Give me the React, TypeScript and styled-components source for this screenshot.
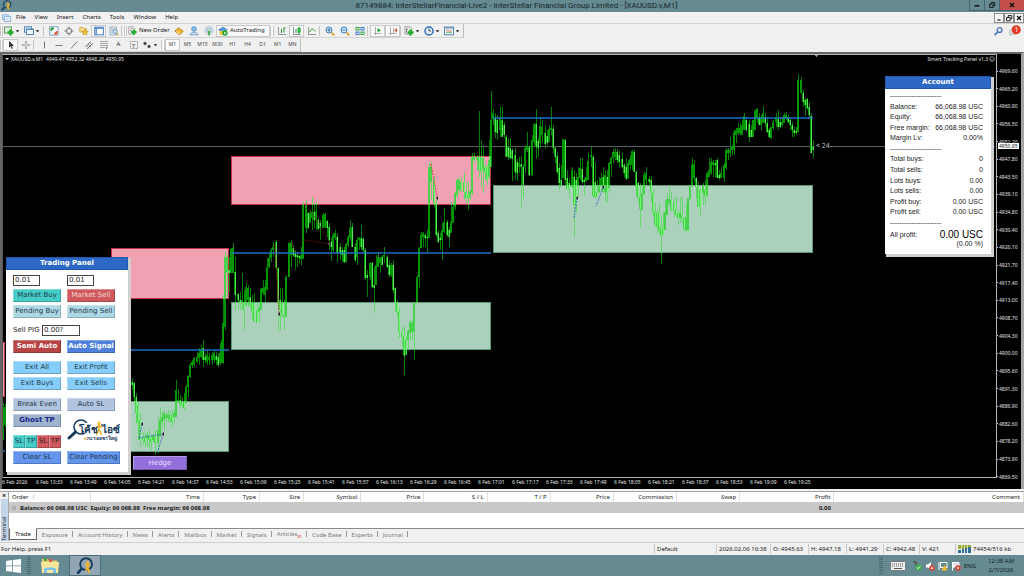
import React from "react";
import styled, { createGlobalStyle, css } from "styled-components";

const UI = `"Noto Sans", "Open Sans", sans-serif`;
const VERDANA = `"DejaVu Sans", sans-serif`;
const ARIAL = `"Liberation Sans", Arial, sans-serif`;

const Global = createGlobalStyle`
  * { box-sizing: border-box; }
  html, body { margin: 0; padding: 0; }
  body { font-family: ${UI}; font-size: 6px; line-height: 8px; color: #1c1c1c; background: #f0f0f0; }
  button, input { font: inherit; color: inherit; margin: 0; padding: 0; border: 0; background: none; border-radius: 0; }
  button { cursor: pointer; white-space: nowrap; }
  h1, h2, p, dl, dd, dt { margin: 0; font: inherit; }
`;

const Window = styled.div`
  display: flex;
  flex-direction: column;
  min-height: 100vh;
`;

/* ---------- title bar ---------- */

const TitleBar = styled.header`
  display: flex;
  align-items: center;
  height: 12px;
  background: #658a92;
`;
const TitleIcon = styled.span`
  width: 64px;
  height: 12px;
  padding-left: 1px;
`;
const Title = styled.h1`
  flex: 1;
  text-align: center;
  font-family: Roboto, ${UI};
  font-size: 8px;
  line-height: 12px;
  color: #17272b;
`;
const TitleButtons = styled.div`
  display: flex;
  align-self: stretch;
  height: 11px;
`;
const TitleButton = styled.button<{ $close?: boolean }>`
  display: flex;
  align-items: center;
  justify-content: center;
  width: ${(p) => (p.$close ? 25 : 15)}px;
  border: 1px solid #47656c;
  border-top: 0;
  border-right-width: 0;
  background: ${(p) => (p.$close ? "#c4504c" : "transparent")};
`;

/* ---------- menu ---------- */

const MenuBar = styled.nav`
  display: flex;
  align-items: center;
  height: 12px;
  border-bottom: 1px solid #d2d2d2;
  background: #f1f1f1;
`;
const MenuIcon = styled.span`
  width: 9px;
  height: 8px;
  margin-left: 2px;
`;
const MenuItem = styled.button`
  padding: 0 5px;
  line-height: 11px;
  color: #111;
  & + & { margin-left: -1px; }
`;
const Spacer = styled.div`
  flex: 1;
`;
const MdiButton = styled.button`
  display: flex;
  align-items: center;
  justify-content: center;
  width: 10px;
  height: 10px;
  border: 1px solid #8c8c8c;
  background: #f8f8f8;
`;

/* ---------- toolbars ---------- */

const ToolArea = styled.div`
  display: flex;
  justify-content: space-between;
  height: 28px;
  background: #f0f0f0;
`;
const ToolRows = styled.div`
  display: flex;
  flex-direction: column;
  align-items: flex-start;
`;
const ToolRow = styled.div`
  display: flex;
  align-items: center;
  height: 14px;
  border-right: 1px solid #bcbcbc;
  border-bottom: 1px solid #d4d4d4;
`;
const Grip = styled.span<{ $w?: number }>`
  width: ${(p) => p.$w ?? 3}px;
  height: 10px;
  border-left: 1px solid #c6c6c6;
  border-right: 1px solid #c6c6c6;
  background: #fafafa;
`;
const Sep = styled.span`
  width: 3px;
  height: 10px;
  border-left: 1px solid #c4c4c4;
`;
const ToolButton = styled.button<{ $w?: number; $on?: boolean }>`
  display: flex;
  align-items: center;
  justify-content: ${(p) => (p.$w ? "flex-start" : "center")};
  gap: 2px;
  width: ${(p) => p.$w ?? 15}px;
  height: 12px;
  padding-left: ${(p) => (p.$w ? 1 : 0)}px;
  line-height: 11px;
  color: #1b1b1b;
  ${(p) =>
    p.$on &&
    css`
      border: 1px solid #c9c9c9;
      background: #f9f9f9;
    `}
`;
const Period = styled(ToolButton)`
  font-size: 5px;
  color: #444;
`;
const Caret = styled.span`
  border: 1px solid transparent;
  border-top: 2px solid #333;
  border-bottom: 0;
  width: 3px;
`;
const Alerts = styled.div`
  display: flex;
  gap: 4px;
  padding: 1px 3px 0 0;
`;
const AlertButton = styled.button`
  width: 12px;
  height: 12px;
`;

function Glyph({ children, size = 10 }: { children: React.ReactNode; size?: number }) {
  return (
    <svg width={size} height={size} viewBox="0 0 10 10" fill="none" aria-hidden="true" style={{ flex: "none", display: "block" }}>
      {children}
    </svg>
  );
}
const plus = <path d="M6.5 3.5v6M3.5 6.5h6" stroke="#1fae2b" strokeWidth="2.6" />;
const icons: Record<string, React.ReactNode> = {
  newChart: (<><rect x=".5" y="1" width="7" height="6" fill="#dff0df" stroke="#5f9a63" />{plus}</>),
  profiles: (<><rect x=".5" y=".8" width="7" height="5.5" fill="#dcebf8" stroke="#5a86b5" /><rect x="2.5" y="3" width="7" height="5.5" fill="#eaf4fc" stroke="#5a86b5" /><path d="M2.5 3.5h7" stroke="#5a86b5" /></>),
  market: (<><rect x=".7" y=".7" width="8.4" height="8.4" fill="#f3f9fd" stroke="#86a9c4" /><path d="M2 5V2h3z" fill="#27a53c" stroke="#27a53c" /><path d="M5 8h3V5z" fill="#e05533" stroke="#e05533" /></>),
  data: (<><circle cx="5" cy="5" r="2.8" stroke="#7d7d7d" /><path d="M5 .5v3M5 6.5v3M.5 5h3M6.5 5h3" stroke="#7d7d7d" /></>),
  navigator: (<><path d="M.8 1.5h3l.8 1h2.6v3.500H.8z" fill="#ffe08a" stroke="#caa23b" strokeWidth=".8" /><path d="M6 3.200l1 1.900 2.100.3-1.500 1.500.3 2.100L6 8l-1.900 1 .3-2.100-1.500-1.500 2.100-.3z" fill="#f3c334" stroke="#b88b1a" strokeWidth=".6" /></>),
  terminal: (<><rect x=".7" y="1.2" width="8.6" height="7.6" fill="#fff" stroke="#3f7cc4" /><path d="M1 2.2h8M2.200 2v6.5" stroke="#3f7cc4" strokeWidth="1.2" /></>),
  tester: (<><rect x="1" y="1" width="6.5" height="8" fill="#eef4f8" stroke="#8aa0b0" strokeWidth=".8" /><path d="M2 3h4M2 5h3M2 7h2" stroke="#8fb0c8" /><circle cx="6.2" cy="5.6" r="2" fill="#cfe6f5" stroke="#5c86a8" strokeWidth=".8" /><path d="M7.7 7.2l1.700 2" stroke="#d8a02a" strokeWidth="1.3" /></>),
  order: (<><path d="M1 .8h4.500l2 2V9H1z" fill="#f7f7f7" stroke="#8c8c8c" strokeWidth=".8" /><path d="M2.500 3h3M2.500 5h2" stroke="#9a9a9a" /><path d="M6.500 3.800v6M3.500 6.800h6" stroke="#1fae2b" strokeWidth="2.4" /></>),
  editor: (<><path d="M.8 5l3.800-3.200 4.700 3.400L5.500 8.800z" fill="#f2b632" stroke="#a8741a" strokeWidth=".8" /><path d="M2.500 5.500l3 2.200" stroke="#fff0b8" /></>),
  expert: (<><circle cx="5" cy="3" r="2.3" fill="#8ec2ec" stroke="#3d7fbb" strokeWidth=".8" /><path d="M1 8.800c0-3 8-3 8 0z" fill="#dcecf8" stroke="#5a8fbf" strokeWidth=".8" /></>),
  signal: (<><circle cx="5" cy="4.5" r="4" stroke="#9fb9cc" strokeWidth=".8" /><circle cx="5" cy="4.5" r="2.2" stroke="#6fa6d0" strokeWidth=".9" /><path d="M5 4.500V9.500" stroke="#2fa83e" strokeWidth="1.6" /></>),
  auto: (<><path d="M.5 3.800L5 1l4.300 2.800L5 6z" fill="#5aa0dc" stroke="#2d6ea8" strokeWidth=".6" /><path d="M1.500 5h5v3.800h-5z" fill="#f3c23c" /><circle cx="7" cy="7" r="2.7" fill="#25a832" /><path d="M6.200 5.700v2.600L8.400 7z" fill="#fff" /></>),
  bars: (<><path d="M1.500 1v8M1 8.500h8" stroke="#999" /><path d="M4.500 3v4M4 6h1M7 1.500v5M7 2h1.500" stroke="#2a9b35" /></>),
  candles: (<><path d="M1.500 1v8M1 8.500h8" stroke="#999" /><path d="M4 3v4M7 1v7" stroke="#1f9430" /><rect x="6" y="2.2" width="2.2" height="4" fill="#2cc044" stroke="#1f9430" strokeWidth=".6" /></>),
  line: (<><path d="M1.500 1v8M1 8.500h8" stroke="#999" /><path d="M2.500 6c2-4 3-4 6-.5" stroke="#2a9b35" /></>),
  zoomIn: (<><circle cx="4" cy="4" r="3" fill="#d6ebf9" stroke="#3f7fb8" /><path d="M4 2.300v3.400M2.300 4h3.400" stroke="#2c6ca6" /><path d="M6.300 6.300l3 3" stroke="#d9a22b" strokeWidth="1.7" /></>),
  zoomOut: (<><circle cx="4" cy="4" r="3" fill="#d6ebf9" stroke="#3f7fb8" /><path d="M2.300 4h3.400" stroke="#2c6ca6" /><path d="M6.300 6.300l3 3" stroke="#d9a22b" strokeWidth="1.7" /></>),
  tile: (<><path d="M.5 1h4v3.500h-4zM5.500 5.500h4V9h-4z" fill="#3aa345" /><path d="M5.500 1h4v3.500h-4zM.5 5.500h4V9h-4z" fill="#3e78c8" /><path d="M1.200 2.800h2.600M6.200 2.800h2.600M1.200 7.300h2.600M6.200 7.300h2.600" stroke="#fff" /></>),
  scroll: (<><path d="M2.500 1v8M1 7.500h8" stroke="#999" strokeWidth=".8" /><path d="M4.500 2v4.500L8 4.200z" fill="#27a53c" /></>),
  shift: (<><path d="M2.500 1v8M1 7.500h8M5.500 1.500v5.500" stroke="#999" strokeWidth=".8" /><path d="M9 2.200v4L6 4.200z" fill="#d6502f" /></>),
  indicators: (<><path d="M1 .8h5l1.500 1.500V8H1z" fill="#f4f4f4" stroke="#888" strokeWidth=".8" /><path d="M2.500 6.500V3h1.500" stroke="#777" />{plus}</>),
  clock: (<><circle cx="5" cy="5" r="4" fill="#e8f2fb" stroke="#2b6cb8" strokeWidth="1.5" /><path d="M5 2.500V5h2" stroke="#333" strokeWidth=".9" /></>),
  template: (<><rect x=".5" y="1" width="9" height="7.8" fill="#f3f8fc" stroke="#5b86ae" /><path d="M.5 2h9" stroke="#5b86ae" /><path d="M2 5l2-1 2 1.500 2-1.500" stroke="#d65b3a" strokeWidth=".8" /><path d="M2 7l2-1 2 1 2-1" stroke="#36a346" strokeWidth=".8" /></>),
  cursor: <path d="M3 .8v7l1.700-1.500 1.200 2.700 1.100-.5-1.200-2.600h2.200z" fill="#333" />,
  cross: <path d="M5 .8v3.400M5 5.800v3.400M.8 5h3.400M5.800 5h3.400" stroke="#777" />,
  vline: <path d="M5.500 1.500v7" stroke="#777" />,
  hline: <path d="M1.500 5.500h7" stroke="#777" />,
  trend: <path d="M2 8.500l6-7" stroke="#777" />,
  channel: <path d="M1 7l6-6M3 9l6-6M2.500 5.500l3 3M4 4l3 3M5.500 2.500l3 3" stroke="#777" strokeWidth=".9" />,
  fibo: (<><path d="M1 1.500h8M1 3.500h8M1 5.500h8M1 7.500h5" stroke="#888" strokeWidth=".7" /><path d="M7.500 9.500V7h1.500" stroke="#666" strokeWidth=".8" /></>),
  label: <rect x="1.5" y="1.5" width="7" height="7" stroke="#777" strokeWidth=".8" strokeDasharray="1 .6" />,
  arrows: <path d="M1 3.500l2-2 2 2-2 2zM5 6.500l2-2 2 2-2 2z" fill="#444" />,
  mdi: (<><rect x=".5" y="1" width="6.5" height="5" fill="#dceafa" stroke="#6fa0d0" strokeWidth=".8" /><rect x="2.5" y="3" width="7" height="5.5" fill="#eef6fd" stroke="#6fa0d0" strokeWidth=".8" /><path d="M4 6.500l1.500-1 2 1" stroke="#6fa0d0" strokeWidth=".7" /></>),
  search: (<><circle cx="6" cy="3.7" r="2.2" stroke="#4a74bd" strokeWidth="1.2" /><path d="M4.300 5.400L1.500 8.300" stroke="#4a74bd" strokeWidth="1.5" /></>),
  seeker: (<><circle cx="5.6" cy="4" r="3.3" stroke="#123c5c" strokeWidth="1" /><path d="M3.200 6.500L.8 9.200" stroke="#123c5c" strokeWidth="1.5" /><circle cx="6.4" cy="3" r=".8" fill="#f0b32a" /><path d="M6.500 3.500v2.500M6.500 5.500l1 3.200M6.500 5.500l-1 2.500M5 4.700l1.500-.7 1.400 1" stroke="#f0b32a" strokeWidth="1" /></>),
};

function Tool({ icon, label, on, drop }: { icon: string; label: string; on?: boolean; drop?: boolean }) {
  return (
    <ToolButton $on={on} $w={drop ? 20 : undefined} aria-label={label}>
      <Glyph>{icons[icon]}</Glyph>
      {drop && <Caret />}
    </ToolButton>
  );
}

/* ---------- chart ---------- */

const ChartFrame = styled.main`
  flex: 1;
  display: grid;
  grid-template-columns: minmax(0, 1fr) 24px;
  grid-template-rows: minmax(0, 1fr) 11px;
  min-height: 436px;
  border: 2px solid #666;
  border-right: 3px solid #a5a5a5;
  border-bottom: 0;
  background: #000;
  color: #e4e4e4;
  font-size: 5px;
  line-height: 6px;
`;
const Plot = styled.section`
  position: relative;
  border: 1px solid #b4b4b4;
  border-left-color: #555;
`;
const Drawing = styled.svg`
  position: absolute;
  inset: 0;
  width: 100%;
  height: 100%;
`;
const PlotHead = styled.div`
  position: relative;
  display: flex;
  justify-content: space-between;
  padding: 1px 1px 0 2px;
`;
const Symbol = styled.span`
  display: flex;
  align-items: center;
  gap: 2px;
`;
const Quotes = styled.span`
  margin-left: 1px;
`;
const Tracker = styled.span`
  display: flex;
  align-items: center;
  gap: 1px;
`;
const WhiteCaret = styled(Caret)`
  width: 4px;
  border-width: 2px 2px 0;
  border-top-color: #e6e6e6;
`;
const PriceAxis = styled.div`
  display: flex;
  flex-direction: column;
  justify-content: space-between;
  position: relative;
  padding: 14px 0 0;
  margin-bottom: -2px;
`;
const PriceTick = styled.span`
  display: flex;
  align-items: center;
  gap: 1px;
  white-space: nowrap;
  &::before { content: ""; width: 1px; height: 1px; background: #ccc; }
`;
const LastPrice = styled.span`
  position: absolute;
  left: 1px;
  top: 89px;
  padding: 0 1px;
  background: #fff;
  color: #111;
`;
const TimeAxis = styled.div`
  display: flex;
  width: 82%;
  padding-top: 1px;
`;
const TimeTick = styled.span`
  flex: 1 0 0;
  min-width: 0;
  white-space: nowrap;
`;

/* Candles: x, high, body top, body bottom, low, in thirds of a pixel from the origin of the run. */
type Run = { x: number; y: number; data: number[] };
const runs: Run[] = [
  { x: 0, y: 250, data: [
    9,460,480,560,570, 15,462,470,525,530,
    390,360,370,405,405, 396,385,395,405,420, 403,395,400,440,455, 409,430,440,490,520, 415,455,465,520,570, 421,490,510,570,590,
    428,545,560,570,585, 434,550,560,575,590, 441,545,555,565,590, 447,540,555,570,595, 453,555,560,575,600, 460,550,555,570,580,
    466,540,560,580,615, 473,500,540,580,610, 479,470,510,560,560, 485,485,500,515,530, 492,480,490,510,540, 498,485,495,505,515,
    505,480,492,505,515, 511,485,495,510,520, 517,480,495,515,530, 523,480,490,500,515, 529,390,420,500,500, 535,418,450,455,460,
    541,435,450,465,475, 547,440,455,465,475, 553,430,455,475,480, 559,405,410,460,460, 565,375,378,410,440, 571,340,345,380,385,
    577,330,335,345,355, 583,320,325,345,350, 590,305,320,335,340, 596,295,310,325,345, 603,285,300,320,325, 609,270,295,330,350,
    615,310,320,330,340, 622,300,315,335,345, 628,310,320,330,345, 635,305,315,330,345, 641,300,310,330,340, 647,305,318,330,345,
    654,310,320,345,350, 660,305,310,340,345 ] },
  { x: 220, y: 140, data: [
    2,600,610,670,670, 8,465,550,670,672, 14,335,350,560,570, 20,345,350,395,470, 27,350,390,400,455, 33,325,328,400,400,
    40,308,325,398,400, 46,350,396,465,510, 53,460,462,480,510, 59,455,480,490,510, 65,400,480,485,510, 72,450,485,510,570,
    78,430,440,495,500, 84,435,445,480,500, 91,445,470,495,505, 97,465,490,520,540, 103,460,490,545,545, 110,485,510,550,550,
    116,485,505,515,550, 122,445,447,510,510, 129,420,445,460,465, 135,420,440,465,490, 142,355,380,450,450, 148,340,355,380,385,
    154,325,330,355,365, 160,305,320,330,350, 167,300,305,385,388, 173,380,385,488,575, 180,445,480,510,570, 186,445,485,528,530,
    193,480,525,530,570, 199,405,410,530,530, 206,305,310,412,412, 212,300,310,345,380, 218,315,325,345,350, 224,330,340,350,390,
    231,335,345,350,380, 237,345,348,355,370, 244,320,345,358,375, 250,185,195,357,358, 257,180,195,265,280, 263,215,218,265,268,
    270,210,218,250,250, 276,170,215,235,270, 282,190,215,240,265, 289,185,212,240,270, 295,235,240,268,270, 301,240,250,265,300,
    308,220,225,265,265, 314,218,222,260,265, 320,240,243,265,290, 327,250,262,300,330, 333,295,305,320,362, 340,280,285,330,335,
    346,270,280,295,300, 352,280,290,340,365, 359,310,320,340,360, 365,320,330,345,365, 372,320,330,365,370, 378,310,312,365,365,
    385,285,290,315,320, 391,240,265,295,300, 397,250,262,320,320, 404,310,320,360,365, 410,290,300,350,375, 417,290,295,300,330,
    423,255,295,320,330, 430,290,298,330,335, 436,325,330,415,420, 442,390,405,415,470, 449,365,370,410,420, 455,365,370,440,445,
    461,380,435,445,520, 468,345,375,435,435, 474,335,350,380,380, 481,350,352,370,400, 487,345,350,375,375, 493,320,345,350,370,
    500,345,350,380,385, 506,360,375,405,410, 513,370,375,405,410, 519,360,375,450,460, 525,440,445,490,515, 532,480,490,515,530,
    538,500,515,575,595, 545,560,575,590,620, 551,560,590,648,705, 558,590,600,645,645, 564,570,572,600,630, 570,540,545,580,600,
    577,540,550,575,600, 583,485,488,575,660, 590,405,410,490,490, 596,320,325,410,445, 602,275,285,325,325, 609,275,278,290,320,
    615,280,285,295,320, 622,270,290,295,335, 628,70,80,295,295, 634,65,80,125,180, 641,110,120,190,200, 647,180,190,285,290,
    654,270,280,305,308, 660,280,295,300,330, 667,250,270,300,360, 673,205,245,275,280, 680,240,245,285,290, 686,260,270,290,320,
    692,185,245,280,280, 699,190,200,250,250, 705,155,160,200,210, 711,115,120,165,175, 718,115,120,150,160, 724,110,125,150,155,
    731,100,125,155,180, 737,125,155,175,190, 744,125,165,175,210, 750,150,152,175,180, 757,40,50,160,165, 763,38,50,60,70,
    770,45,50,60,90, 776,-86,50,90,115, 782,0,50,95,140, 789,20,55,90,160, 795,70,80,100,120, 802,75,80,120,135, 808,0,60,110,120 ] },
  { x: 480, y: 70, data: [
    34,62,150,290,290, 40,118,130,148,165, 46,130,145,185,205, 52,135,150,190,210, 59,110,145,180,200, 65,110,150,200,200, 72,155,165,195,205,
    78,195,200,262,262, 85,205,230,262,270, 91,205,235,265,268, 97,235,240,268,332, 104,235,255,305,330, 110,268,275,308,332,
    116,262,280,290,310, 122,258,283,290,412, 129,283,290,344,385, 135,225,235,290,310, 142,187,228,240,245, 148,225,230,315,318,
    155,195,210,315,318, 162,160,162,215,225, 168,118,162,230,268, 174,205,212,235,262, 181,140,168,220,235, 187,150,170,195,220,
    194,165,190,222,238, 200,180,198,220,225, 206,165,178,215,215, 213,110,175,180,195, 219,165,177,235,248, 225,230,235,262,280,
    231,245,258,305,312, 238,280,295,340,360, 244,285,330,345,352, 250,207,208,325,325, 256,207,210,330,345, 262,300,325,357,360,
    268,325,340,357,385, 275,290,300,350,355, 281,300,320,405,500, 288,310,330,405,430, 294,290,320,345,380, 300,265,293,325,330,
    307,265,298,335,342, 313,325,330,335,375, 319,290,320,332,335, 325,250,272,330,330, 332,232,255,262,290, 338,255,260,378,385,
    344,275,335,380,385, 350,330,365,380,385, 356,320,345,365,370, 362,310,325,345,365, 369,290,322,365,370, 375,300,315,365,395,
    381,300,320,370,398, 387,275,280,355,370, 393,260,265,282,320, 400,237,245,265,280, 406,235,245,262,270, 412,238,245,270,280,
    418,243,255,275,290, 425,250,268,290,295, 431,278,285,310,320, 437,265,290,328,330, 443,270,280,325,328, 449,255,268,285,300,
    455,240,243,285,300, 462,240,245,305,305, 468,300,305,350,380, 474,335,340,385,395, 481,340,380,418,472, 487,345,370,420,420,
    493,305,315,372,375, 499,290,310,330,350, 506,318,328,335,345, 512,318,330,370,395, 518,360,370,425,440, 524,400,425,465,470,
    530,420,430,470,490, 537,400,430,480,492, 543,440,470,495,583, 549,425,475,495,495, 555,390,425,480,480, 562,370,388,435,435,
    568,352,388,400,408, 574,365,390,420,425, 581,380,395,425,440, 587,380,420,435,445, 593,420,430,445,465, 599,380,430,445,460,
    606,380,435,445,460, 612,440,445,478,485, 618,400,440,480,485, 624,385,385,480,482, 630,345,345,388,390, 637,265,285,345,350,
    643,270,282,325,335, 649,320,325,350,385, 655,335,350,410,412, 661,355,360,410,438, 668,340,345,370,405, 674,330,360,380,405,
    680,305,310,378,380, 687,265,300,320,320, 693,265,275,310,315, 699,270,275,285,320, 706,270,278,285,320, 712,265,270,325,325,
    718,300,315,325,330, 724,290,310,325,325, 731,280,285,325,335, 737,235,240,295,300, 743,235,240,250,270, 750,200,240,250,260,
    756,225,230,240,255, 762,180,185,240,255, 768,175,180,195,220, 774,160,175,190,195, 781,160,175,190,195, 787,150,165,195,195,
    793,130,138,180,180, 799,140,150,180,185, 806,150,163,200,215, 812,165,180,200,200, 818,150,150,200,200, 824,118,122,180,180,
    831,115,118,145,160, 837,130,140,165,165, 843,135,140,165,180, 849,108,130,160,160, 855,128,140,160,170, 862,145,160,185,190,
    868,175,180,200,205, 874,170,170,205,208, 880,150,155,175,180, 887,130,140,155,170, 893,120,148,170,180, 899,140,155,170,175,
    906,140,155,165,170, 912,128,135,160,160, 918,125,135,145,150, 924,135,140,155,160, 931,145,150,165,180, 937,155,165,180,200,
    943,170,180,190,200, 949,170,183,190,195, 955,13,30,185,185, 962,22,30,70,72, 968,60,70,95,110, 974,85,90,105,138,
    981,85,88,115,120, 987,95,110,135,148, 994,130,137,248,250, 1000,210,230,240,263 ] },
];

type Candle = { x: number; hi: number; top: number; bot: number; lo: number; down: boolean };
const candles: Candle[] = runs.flatMap((run) => {
  const out: Candle[] = [];
  let prev = 0;
  for (let i = 0; i < run.data.length; i += 5) {
    const [x, hi, top, bot, lo] = run.data.slice(i, i + 5);
    const mid = top + bot;
    out.push({
      x: Math.round(run.x + x / 3),
      hi: Math.round(run.y + hi / 3),
      top: Math.round(run.y + top / 3),
      bot: Math.round(run.y + bot / 3),
      lo: Math.round(run.y + lo / 3),
      down: i > 0 && mid > prev,
    });
    prev = mid;
  }
  return out;
});

function Candles({ wick, up, down }: { wick: string; up: string; down: string }) {
  return (
    <>
      {candles.map((c, i) => {
        const h = Math.max(1, c.bot - c.top);
        return (
          <g key={i}>
            <rect x={c.x} y={c.hi} width={1} height={Math.max(1, c.lo - c.hi)} fill={wick} />
            <rect x={c.x - 1} y={c.top} width={2} height={h} fill={up} />
            {c.down && <rect x={c.x} y={c.top} width={1} height={h} fill={down} />}
          </g>
        );
      })}
    </>
  );
}

type Zone = [number, number, number, number, "sell" | "buy"];
const zones: Zone[] = [
  [2, 342, 3, 55, "sell"],
  [111, 248, 118, 51, "sell"],
  [231, 156, 260, 49, "sell"],
  [111, 401, 118, 51, "buy"],
  [231, 302, 260, 48, "buy"],
  [493, 185, 320, 68, "buy"],
];
const levels = [[2, 451, 5], [111, 350, 229], [231, 253, 491], [493, 118, 813]];
const trades: [string, string][] = [
  ["M275 245l4 69", "#c0302c"], ["M292 242l3 11", "#c0302c"], ["M306 203l24 40", "#7a1414"], ["M303 240l27 4", "#7a1414"],
  ["M431 164l6 32", "#c0302c"], ["M142 424l-3 15", "#3b4fd0"], ["M139 438l24-4-6 20", "#3b4fd0"],
  ["M577 198l-3 20", "#3b4fd0"], ["M603 188l-7 18", "#3b4fd0"],
];
const fills: [number, number][] = [[279, 314], [330, 244], [437, 198], [142, 424], [163, 434], [577, 198], [603, 187]];

function ChartDrawing() {
  return (
    <Drawing aria-hidden="true" shapeRendering="crispEdges">
      <g transform="translate(-3 -55)">
        <rect x="2" y="146" width="100%" height="1" fill="#59636c" />
        <Candles wick="#008200" up="#009600" down="#5ae25a" />
        <clipPath id="zoneClip">
          {zones.map(([x, y, w, h], i) => (
            <rect key={i} x={x} y={y} width={w} height={h} />
          ))}
        </clipPath>
        {zones.map(([x, y, w, h, kind], i) => (
          <rect key={i} x={x + 0.5} y={y + 0.5} width={w - 1} height={h - 1} fill={kind === "sell" ? "#f2a1b2" : "#abd1bd"} stroke={kind === "sell" ? "#c2344e" : "#5b9a79"} />
        ))}
        <g clipPath="url(#zoneClip)">
          <Candles wick="#66d96c" up="#48d24e" down="#74f674" />
        </g>
        {levels.map(([x, y, x2]) => (
          <rect key={y} x={x} y={y - 1} width={x2 - x} height={1} fill="#1c76d2" opacity=".7" />
        ))}
        {levels.map(([x, y, x2]) => (
          <rect key={y} x={x} y={y} width={x2 - x} height={1} fill="#1c76d2" opacity=".7" />
        ))}
        <g fill="none" strokeDasharray="2 1" shapeRendering="auto">
          {trades.map(([d, c]) => (
            <path key={d} d={d} stroke={c} strokeWidth=".8" />
          ))}
        </g>
        {fills.map(([x, y]) => (
          <path key={x} d={`M${x + 1} ${y - 2}v4l-3-2z`} fill="#222" stroke="#ddd" strokeWidth=".3" />
        ))}
        <path d="M814 54h5l-2.500 3z" fill="#7e8d9a" />
      </g>
    </Drawing>
  );
}

const LotMark = styled.span`
  position: absolute;
  left: 812px;
  top: 87px;
  padding-left: 1px;
  background: #000;
  font-size: 7px;
  line-height: 8px;
  color: #b9bec3;
`;

/* ---------- floating panels ---------- */

const Panel = styled.section`
  position: absolute;
  background: #fff;
  color: #222;
  box-shadow: 2px 2px 0 1px #cfcfcf;
`;
const PanelTitle = styled.h2`
  height: 13px;
  border: 1px solid #2257b0;
  background: #2d68c4;
  color: #fff;
  font: bold 7px/11px ${VERDANA};
  text-align: center;
`;
const TradingBox = styled(Panel)`
  left: 3px;
  top: 202px;
  width: 122px;
  font: 7px/11px ${VERDANA};
`;
const TradingBody = styled.div`
  display: flex;
  flex-direction: column;
  gap: 8px;
  padding: 5px 6px 8px 7px;
`;
const Pairs = styled.div`
  display: grid;
  grid-template-columns: 48px 48px;
  gap: 3px 6px;
`;
const Columns = styled.div`
  display: flex;
  gap: 6px;
`;
const Column = styled.div<{ $w: number }>`
  display: flex;
  flex-direction: column;
  align-items: flex-start;
  gap: 3px;
  width: ${(p) => p.$w}px;
`;
const Field = styled.input<{ $w: number }>`
  width: ${(p) => p.$w}px;
  height: 11px;
  padding-left: 1px;
  border: 1px solid #444;
  background: #fff;
`;
const FieldRow = styled.div`
  display: flex;
  align-items: center;
  gap: 1px;
  margin: -1px 0 1px;
`;
const PigLabel = styled.label`
  width: 28px;
  white-space: nowrap;
`;
const Act = styled.button<{ $bg: string; $fg?: string; $bold?: boolean; $w?: number }>`
  display: flex;
  align-items: center;
  justify-content: center;
  flex: none;
  width: ${(p) => p.$w ?? 48}px;
  height: 13px;
  background: ${(p) => p.$bg};
  color: ${(p) => p.$fg ?? "#1e3a4c"};
  font-weight: ${(p) => (p.$bold ? "bold" : "normal")};
  border: 1px solid rgba(255, 255, 255, 0.3);
  border-right-color: rgba(0, 0, 0, 0.2);
  border-bottom-color: rgba(0, 0, 0, 0.2);
`;
const Minis = styled.div`
  display: flex;
  padding-top: 5px;
`;
const Logo = styled.div`
  display: flex;
  align-items: center;
  height: 34px;
`;
const Hedge = styled(Act)`
  position: absolute;
  left: 130px;
  top: 401px;
  height: 14px;
  font: 7px/11px ${VERDANA};
`;

const AccountBox = styled(Panel)`
  right: 5px;
  top: 21px;
  width: 106px;
  font: 7px/10px ${ARIAL};
`;
const AccountBody = styled.dl`
  display: flex;
  flex-direction: column;
  justify-content: space-between;
  height: 139px;
  padding: 2px 8px 0 5px;
`;
const AccountLine = styled.div`
  display: flex;
  justify-content: space-between;
  white-space: nowrap;
`;
const Total = styled.div`
  display: flex;
  justify-content: space-between;
  align-items: center;
  padding: 1px 8px 0 5px;
`;
const TotalValue = styled.strong`
  font-weight: normal;
  font-size: 10px;
  line-height: 11px;
  color: #000;
`;
const Percent = styled.p`
  padding: 0 8px 6px 0;
  line-height: 8px;
  text-align: right;
`;

const dashes = "----------------------";
const account: [string, string][] = [
  [dashes, ""], ["Balance:", "66,068.98 USC"], ["Equity:", "66,068.98 USC"], ["Free margin:", "66,068.98 USC"], ["Margin Lv:", "0.00%"],
  [dashes, ""], ["Total buys:", "0"], ["Total sells:", "0"], ["Lots buys:", "0.00"], ["Lots sells:", "0.00"],
  ["Profit buy:", "0.00 USC"], ["Profit sell:", "0.00 USC"], [dashes, ""],
];

function TradingPanel() {
  return (
    <TradingBox>
      <PanelTitle>Trading Panel</PanelTitle>
      <TradingBody>
        <Pairs>
          <Field $w={27} defaultValue="0.01" aria-label="Buy lots" />
          <Field $w={27} defaultValue="0.01" aria-label="Sell lots" />
          <Act $bg="#45ccc6">Market Buy</Act>
          <Act $bg="#cf5a5e" $fg="#f6d5d6">Market Sell</Act>
          <Act $bg="#add8e4">Pending Buy</Act>
          <Act $bg="#add8e4">Pending Sell</Act>
        </Pairs>
        <Column $w={108}>
          <FieldRow>
            <PigLabel htmlFor="pig">Sell PIG</PigLabel>
            <Field id="pig" $w={38} defaultValue="0.00?" />
          </FieldRow>
          <Columns>
            <Act $bg="#b84444" $fg="#fff" $bold>Semi Auto</Act>
            <Act $bg="#4f80dc" $fg="#fff" $bold>Auto Signal</Act>
          </Columns>
        </Column>
        <Pairs>
          <Act $bg="#87cdfa">Exit All</Act>
          <Act $bg="#87cdfa">Exit Profit</Act>
          <Act $bg="#87cdfa">Exit Buys</Act>
          <Act $bg="#87cdfa">Exit Sells</Act>
        </Pairs>
        <Columns>
          <Column $w={48}>
            <Act $bg="#b0c4de">Break Even</Act>
            <Act $bg="#9db4cc" $fg="#1a1f8c" $bold>Ghost TP</Act>
            <Minis>
              <Act $w={12} $bg="#45ccc6">SL</Act>
              <Act $w={12} $bg="#45ccc6">TP</Act>
              <Act $w={12} $bg="#cf5a5e" $fg="#3a1a1c">SL</Act>
              <Act $w={12} $bg="#cf5a5e" $fg="#3a1a1c">TP</Act>
            </Minis>
            <Act $bg="#6495ed">Clear SL</Act>
          </Column>
          <Column $w={53}>
            <Act $bg="#b0c4de">Auto SL</Act>
            <Logo>
              <svg width="54" height="26" viewBox="0 0 54 26" role="img" aria-label="โค้ชไอซ์">
                <circle cx="14" cy="9" r="7" fill="none" stroke="#15385a" strokeWidth="1.5" />
                <path d="M8.500 14L2 20" stroke="#15385a" strokeWidth="3" strokeLinecap="round" />
                <rect x="14" y="5" width="14" height="10" fill="#fff" />
                <circle cx="32" cy="5" r="1.5" fill="#f2b52c" />
                <path d="M32 6v6M32 11l2.500 6M32 11l-2.500 6M29 10l3-2.500 3 2" stroke="#f2b52c" strokeWidth="1.6" fill="none" />
                <text x="12" y="15" fontSize="10" fontWeight="bold" fill="#15385a" fontFamily={UI}>โค้ช</text>
                <text x="35" y="15" fontSize="10" fontWeight="bold" fill="#15385a" fontFamily={UI}>ไอซ์</text>
                <text x="17" y="22" fontSize="5" fontWeight="bold" fill="#15385a" fontFamily={UI}>
                  <tspan fill="#e0a21f">แ</tspan>กะรอยขาใหญ่
                </text>
              </svg>
            </Logo>
            <Act $w={53} $bg="#6495ed">Clear Pending</Act>
          </Column>
        </Columns>
      </TradingBody>
    </TradingBox>
  );
}

function AccountPanel() {
  return (
    <AccountBox>
      <PanelTitle>Account</PanelTitle>
      <AccountBody>
        {account.map(([k, v], i) => (
          <AccountLine key={i}>
            <dt>{k}</dt>
            <dd>{v}</dd>
          </AccountLine>
        ))}
      </AccountBody>
      <Total>
        All profit: <TotalValue>0.00 USC</TotalValue>
      </Total>
      <Percent>(0.00 %)</Percent>
    </AccountBox>
  );
}

const prices = "4969.60 4965.20 4960.90 4956.50 4952.20 4947.80 4943.50 4939.10 4934.80 4930.40 4926.10 4921.70 4917.40 4913.00 4908.70 4904.30 4900.00 4895.60 4891.30 4886.90 4882.60 4878.20 4873.90 4869.50".split(" ");
const times = "2026 13:33 13:49 14:05 14:21 14:37 14:53 15:09 15:25 15:41 15:57 16:13 16:29 16:45 17:01 17:17 17:33 17:49 18:05 18:21 18:37 18:53 19:09 19:25".split(" ");

/* ---------- terminal ---------- */

const Terminal = styled.section`
  display: flex;
  margin-top: 2px;
  border-top: 1px solid #a6a6a6;
`;
const TerminalSide = styled.div`
  display: flex;
  flex-direction: column;
  align-items: center;
  width: 9px;
  border-right: 1px solid #a6a6a6;
`;
const SideClose = styled.button`
  height: 7px;
  font-size: 7px;
  line-height: 6px;
  font-weight: bold;
`;
const SideLabel = styled.span`
  flex: 1;
  width: 7px;
  line-height: 7px;
  background: #c3d5e8;
  writing-mode: vertical-rl;
  transform: rotate(180deg);
`;
const TerminalMain = styled.div`
  flex: 1;
  min-width: 0;
  display: flex;
  flex-direction: column;
`;
const Grid = styled.div`
  height: 37px;
  background: #fff;
  border-bottom: 1px solid #8b8b8b;
`;
const Table = styled.table`
  width: 100%;
  table-layout: fixed;
  border-collapse: collapse;
`;
const Th = styled.th<{ $left?: boolean }>`
  height: 10px;
  padding: 0 3px;
  border-right: 1px solid #e0e0e0;
  font-weight: normal;
  line-height: 9px;
  text-align: ${(p) => (p.$left ? "left" : "right")};
`;
const SortMark = styled.span`
  margin-left: 4px;
  color: #888;
`;
const Td = styled.td<{ $left?: boolean }>`
  height: 11px;
  padding: 0 3px;
  background: #c8c8c8;
  font-weight: bold;
  line-height: 10px;
  text-align: ${(p) => (p.$left ? "left" : "right")};
  white-space: pre;
`;
const Dot = styled.span`
  display: inline-block;
  width: 4px;
  height: 4px;
  margin-right: 4px;
  border: 1px solid #999;
  border-radius: 50%;
`;
const Tabs = styled.div`
  display: flex;
  height: 12px;
`;
const Tab = styled.button<{ $on?: boolean }>`
  position: relative;
  height: 11px;
  padding: 0 5px;
  line-height: 10px;
  color: #7b7b7b;
  &::after { content: ""; position: absolute; right: 0; top: 2px; width: 1px; height: 6px; background: #999; }
  ${(p) =>
    p.$on &&
    css`
      margin: -1px 0 0 0;
      height: 12px;
      color: #111;
      background: #fff;
      border: 1px solid #666;
      border-top-color: #fff;
      &::after { display: none; }
    `}
`;
const Count = styled.sub`
  font-size: 4px;
  line-height: 4px;
  color: #e03535;
`;

const columns: [string, number][] = [
  ["Order", 81], ["Time", 113], ["Type", 56], ["Size", 44], ["Symbol", 57], ["Price", 63], ["S / L", 63], ["T / P", 63],
  ["Price", 63], ["Commission", 63], ["Swap", 63], ["Profit", 94], ["Comment", 189],
];
const tabs = ["Trade", "Exposure", "Account History", "News", "Alerts", "Mailbox", "Market", "Signals", "Articles", "Code Base", "Experts", "Journal"];

/* ---------- status and task bars ---------- */

const StatusBar = styled.footer`
  display: flex;
  align-items: center;
  height: 13px;
  margin-top: 1px;
  border-top: 1px solid #cfcfcf;
`;
const Cell = styled.span<{ $w?: number }>`
  display: flex;
  align-items: center;
  gap: 2px;
  flex: ${(p) => (p.$w ? `0 0 ${p.$w}px` : "1")};
  padding-left: ${(p) => (p.$w ? 2 : 1)}px;
  border-left: ${(p) => (p.$w ? "1px solid #c8c8c8" : "0")};
  line-height: 10px;
  white-space: nowrap;
`;
const cells: [string, number][] = [
  ["Default", 62], ["2026.02.06 16:38", 54], ["O: 4945.63", 38], ["H: 4947.18", 38], ["L: 4941.29", 37], ["C: 4942.48", 36], ["V: 421", 36],
];

const TaskBar = styled.footer`
  display: flex;
  align-items: center;
  height: 21px;
  background: #658a92;
  color: #14262b;
`;
const TaskButton = styled.button<{ $w: number; $on?: boolean }>`
  display: flex;
  align-items: center;
  justify-content: center;
  width: ${(p) => p.$w}px;
  height: 21px;
  background: ${(p) => (p.$on ? "#92a5b4" : "transparent")};
  border: ${(p) => (p.$on ? "1px solid #4e6f78" : "0")};
`;
const TaskGrip = styled.span`
  width: 4px;
  height: 17px;
  background: repeating-linear-gradient(#4b6a72 0 1px, transparent 1px 2px);
`;
const Tray = styled.div`
  display: flex;
  align-items: center;
  gap: 3px;
  padding: 0 4px 0 7px;
`;
const TrayButton = styled.button<{ $w?: number }>`
  display: flex;
  width: ${(p) => p.$w ?? 10}px;
  margin-right: ${(p) => (p.$w ? 3 : 0)}px;
`;
const Clock = styled.time`
  width: 38px;
  margin-left: 3px;
  line-height: 9px;
  text-align: center;
`;

export default function App() {
  return (
    <Window>
      <Global />
      <TitleBar>
        <TitleIcon><Glyph size={11}>{icons.seeker}</Glyph></TitleIcon>
        <Title>87149884: InterStellarFinancial-Live2 - InterStellar Financial Group Limited - [XAUUSD.v,M1]</Title>
        <TitleButtons>
          <TitleButton aria-label="Minimize"><Glyph size={8}><path d="M2 6h6" stroke="#111" strokeWidth="2" /></Glyph></TitleButton>
          <TitleButton aria-label="Restore"><Glyph size={8}><path d="M2 4h4.500v4H2zM4 3.500V2h4.500v4H7" stroke="#111" strokeWidth="1.2" /></Glyph></TitleButton>
          <TitleButton $close aria-label="Close"><Glyph size={8}><path d="M2.500 2.500l5 5M7.500 2.500l-5 5" stroke="#111" strokeWidth="1.8" /></Glyph></TitleButton>
        </TitleButtons>
      </TitleBar>

      <MenuBar>
        <MenuIcon><Glyph size={9}>{icons.mdi}</Glyph></MenuIcon>
        {["File", "View", "Insert", "Charts", "Tools", "Window", "Help"].map((m) => (
          <MenuItem key={m}>{m}</MenuItem>
        ))}
        <Spacer />
        <MdiButton aria-label="Minimize chart"><Glyph size={8}><path d="M3 7.500h4" stroke="#111" strokeWidth="1.5" /></Glyph></MdiButton>
        <MdiButton aria-label="Restore chart"><Glyph size={8}><path d="M2 4.500h4.500v4H2zM4 4V2h4.500v4H7" stroke="#111" strokeWidth="1.2" /></Glyph></MdiButton>
        <MdiButton aria-label="Close chart"><Glyph size={8}><path d="M2.500 2.500l5 5M7.500 2.500l-5 5" stroke="#111" strokeWidth="1.6" /></Glyph></MdiButton>
      </MenuBar>

      <ToolArea>
        <ToolRows>
          <ToolRow>
            <Grip />
            <Tool icon="newChart" label="New chart" drop />
            <Tool icon="profiles" label="Profiles" drop />
            <Sep />
            <Tool icon="market" label="Market watch" />
            <Tool icon="data" label="Data window" />
            <Tool icon="navigator" label="Navigator" />
            <Tool icon="terminal" label="Terminal" on />
            <Tool icon="tester" label="Strategy tester" />
            <Sep />
            <Grip />
            <ToolButton $w={44}><Glyph size={9}>{icons.order}</Glyph>New Order</ToolButton>
            <Tool icon="editor" label="MetaEditor" />
            <Tool icon="expert" label="Experts" />
            <Tool icon="signal" label="Signals" />
            <ToolButton $w={54} $on><Glyph size={10}>{icons.auto}</Glyph>AutoTrading</ToolButton>
            <Grip $w={4} />
            <Tool icon="bars" label="Bar chart" />
            <Tool icon="candles" label="Candlesticks" on />
            <Tool icon="line" label="Line chart" />
            <Sep />
            <Tool icon="zoomIn" label="Zoom in" />
            <Tool icon="zoomOut" label="Zoom out" />
            <Tool icon="tile" label="Tile windows" />
            <Sep />
            <Tool icon="scroll" label="Auto scroll" on />
            <Tool icon="shift" label="Chart shift" on />
            <Sep />
            <Tool icon="indicators" label="Indicators" drop />
            <Tool icon="clock" label="Periods" drop />
            <Tool icon="template" label="Templates" drop />
          </ToolRow>
          <ToolRow>
            <Grip />
            <Tool icon="cursor" label="Cursor" on />
            <Tool icon="cross" label="Crosshair" />
            <Sep />
            <Tool icon="vline" label="Vertical line" />
            <Tool icon="hline" label="Horizontal line" />
            <Tool icon="trend" label="Trendline" />
            <Tool icon="channel" label="Channel" />
            <Tool icon="fibo" label="Fibonacci" />
            <ToolButton aria-label="Text">A</ToolButton>
            <ToolButton aria-label="Text label">
              <Glyph>
                {icons.label}
                <text x="3" y="7.5" fontSize="6" fill="#444" fontFamily={UI}>T</text>
              </Glyph>
            </ToolButton>
            <Tool icon="arrows" label="Arrows" drop />
            <Grip $w={4} />
            {["M1", "M5", "M15", "M30", "H1", "H4", "D1", "W1", "MN"].map((p, i) => (
              <Period key={p} $on={i === 0}>{p}</Period>
            ))}
          </ToolRow>
        </ToolRows>
        <Alerts>
          <AlertButton aria-label="Search"><Glyph size={11}>{icons.search}</Glyph></AlertButton>
          <AlertButton aria-label="Notifications">
            <Glyph size={12}>
              <path d="M.5 5.500c0-3 6-3 6 0s-3 2.500-4 2.300L1 9z" fill="#ddd" stroke="#aaa" strokeWidth=".6" />
              <circle cx="6" cy="4" r="3.8" fill="#e23a24" />
              <text x="4.6" y="6.2" fontSize="6" fill="#fff" fontFamily={UI}>1</text>
            </Glyph>
          </AlertButton>
        </Alerts>
      </ToolArea>

      <ChartFrame>
        <Plot>
          <ChartDrawing />
          <PlotHead>
            <Symbol><WhiteCaret />XAUUSD.v,M1<Quotes>4949.47 4952.32 4948.26 4950.95</Quotes></Symbol>
            <Tracker>
              Smart Tracking Panel v1.3
              <Glyph size={6}><circle cx="5" cy="5" r="4" stroke="#ccc" /><path d="M3 3.500v1M7 3.500v1M3 6.500h4" stroke="#ccc" /></Glyph>
            </Tracker>
          </PlotHead>
          <LotMark>&lt; 24</LotMark>
          <TradingPanel />
          <Hedge $w={54} $bg="#9370db" $fg="#e9ddff">Hedge</Hedge>
          <AccountPanel />
        </Plot>
        <PriceAxis>
          {prices.map((p) => <PriceTick key={p}>{p}</PriceTick>)}
          <LastPrice>4950.95</LastPrice>
        </PriceAxis>
        <TimeAxis>
          {times.map((t) => <TimeTick key={t}>6 Feb {t}</TimeTick>)}
        </TimeAxis>
      </ChartFrame>

      <Terminal>
        <TerminalSide>
          <SideClose aria-label="Close terminal">×</SideClose>
          <SideLabel>Terminal</SideLabel>
        </TerminalSide>
        <TerminalMain>
          <Grid>
            <Table>
              <colgroup>
                {columns.map(([, w], i) => <col key={i} style={{ width: `${(w / 1012) * 100}%` }} />)}
              </colgroup>
              <thead>
                <tr>
                  {columns.map(([c], i) => (
                    <Th key={i} $left={i === 0}>{c}{i === 0 && <SortMark>/</SortMark>}</Th>
                  ))}
                </tr>
              </thead>
              <tbody>
                <tr>
                  <Td $left colSpan={11}><Dot />Balance: 66 068.98 USC  Equity: 66 068.98  Free margin: 66 068.98</Td>
                  <Td>0.00</Td>
                  <Td />
                </tr>
              </tbody>
            </Table>
          </Grid>
          <Tabs>
            {tabs.map((t, i) => (
              <Tab key={t} $on={i === 0}>{t}{t === "Articles" && <Count>81</Count>}</Tab>
            ))}
          </Tabs>
        </TerminalMain>
      </Terminal>

      <StatusBar>
        <Cell>For Help, press F1</Cell>
        {cells.map(([t, w]) => <Cell key={t} $w={w}>{t}</Cell>)}
        <Cell $w={69}>
          <svg width="13" height="8" viewBox="0 0 13 8" aria-hidden="true">
            <path d="M0 0h13v4H0z" fill="#9bb03a" />
            <path d="M0 5h3v3H0zM4 4h2v4H4zM7 3h2v5H7zM10 2h3v6h-3z" fill="#2f6f8f" />
            <path d="M3.500 0v8M6.500 0v8M9.500 0v8" stroke="#eef" strokeWidth=".6" />
          </svg>
          74454/516 kb
        </Cell>
      </StatusBar>

      <TaskBar>
        <TaskButton $w={27} aria-label="Start">
          <svg width="15" height="14" viewBox="0 0 15 14" fill="#fff"><path d="M0 2l6-.9v5.500H0zM6.800 1L15 0v6.600H6.800zM0 7.300h6v5.500L0 12zM6.800 7.300H15V14l-8.200-1z" /></svg>
        </TaskButton>
        <TaskGrip />
        <TaskButton $w={38} aria-label="File Explorer">
          <svg width="18" height="16" viewBox="0 0 18 16">
            <path d="M1 1h6l1 1.500h8V14H1z" fill="#e9cf6b" />
            <path d="M3 0h3v3H3z" fill="#4da256" /><path d="M8 1h3v3H8z" fill="#d6584a" />
            <path d="M0 4h18l-1 11H1z" fill="#f7e79a" />
            <path d="M3 15v-4c0-2 12-2 12 0v4h-3v-3H6v3z" fill="#7fc4ea" />
          </svg>
        </TaskButton>
        <TaskButton $w={32} $on aria-label="InterStellar terminal"><Glyph size={18}>{icons.seeker}</Glyph></TaskButton>
        <Spacer />
        <TaskGrip />
        <Tray>
          <TrayButton $w={16} aria-label="Keyboard">
            <svg width="16" height="10" viewBox="0 0 16 10"><rect x=".5" y=".5" width="15" height="9" rx="1" fill="#eee" stroke="#777" /><path d="M2 3h12M2 5h12" stroke="#555" strokeDasharray="1 1" /><path d="M4 7.500h8" stroke="#555" /></svg>
          </TrayButton>
          <TrayButton aria-label="USB"><Glyph><path d="M1 1h3v3l2 3" stroke="#555" strokeWidth="1.5" /><circle cx="6.5" cy="6.5" r="3" fill="#3fb346" /><path d="M5 6.500l1.200 1.200L8.200 5.500" stroke="#fff" /></Glyph></TrayButton>
          <TrayButton aria-label="Sound"><Glyph><path d="M1 3.500h2L6 1v8L3 6.500H1z" fill="#fff" /><circle cx="7" cy="7" r="2.8" fill="#e0402f" /><path d="M6 6l2 2M8 6L6 8" stroke="#fff" strokeWidth=".8" /></Glyph></TrayButton>
          <TrayButton aria-label="Network"><Glyph><rect x="2.5" y="1.5" width="6.5" height="5" stroke="#fff" /><path d="M1 1v8" stroke="#fff" /><path d="M3.500 9.500L6.500 4l3 5.500z" fill="#f5bd2c" /></Glyph></TrayButton>
          <TrayButton aria-label="Action center"><Glyph><path d="M1.500 1v8.500M2 1.500h6V6H2z" stroke="#fff" fill="#dde" /><circle cx="7" cy="7" r="2.8" fill="#e0402f" /><path d="M6 6l2 2M8 6L6 8" stroke="#fff" strokeWidth=".8" /></Glyph></TrayButton>
          <span>ENG</span>
          <Clock>12:38 AM<br />2/7/2026</Clock>
        </Tray>
      </TaskBar>
    </Window>
  );
}
